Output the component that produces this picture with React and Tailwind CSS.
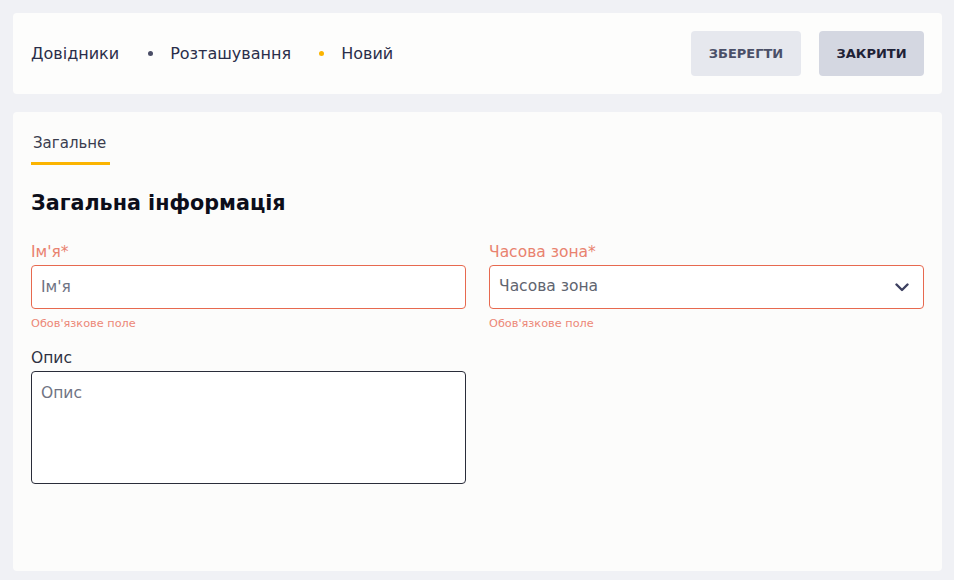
import React from 'react';

const FONT = { fontFamily: '"DejaVu Sans", "Noto Sans", sans-serif' };

function Field({ label, error, children, required }) {
  return (
    <div className="flex flex-col">
      <label className={`text-[15.5px] leading-[18px] mb-[4px] ${required ? 'text-[#e9826f]' : 'text-[#2e3142]'}`}>
        {label}
      </label>
      {children}
      {error && <span className="text-[11.3px] leading-[14px] mt-[8px] text-[#ec8777]">{error}</span>}
    </div>
  );
}

export default function App() {
  return (
    <div className="min-h-[580px] bg-[#f0f1f5] pl-[13px] pr-[12px] pt-[13px] pb-[9px] flex flex-col gap-[18px]" style={FONT}>
      {/* Header */}
      <div className="bg-[#fdfdfc] rounded-[4px] h-[81px] flex items-center justify-between pl-[18px] pr-[18px]">
        <div className="flex items-center text-[16px] text-[#2a2e4a]">
          <span>Довідники</span>
          <span className="w-[5px] h-[5px] rounded-full bg-[#4a4d66] ml-[29px] mr-[17px]" />
          <span>Розташування</span>
          <span className="w-[5px] h-[5px] rounded-full bg-[#fbb400] ml-[28px] mr-[17px]" />
          <span>Новий</span>
        </div>
        <div className="flex items-center gap-[18px]">
          <button className="h-[45px] w-[110px] rounded-[4px] bg-[#e6e8ee] text-[13px] font-bold text-[#4b5068]">
            ЗБЕРЕГТИ
          </button>
          <button className="h-[45px] w-[105px] rounded-[4px] bg-[#d4d7e1] text-[13px] font-bold text-[#1f2236]">
            ЗАКРИТИ
          </button>
        </div>
      </div>

      {/* Body */}
      <div className="flex-1 bg-[#fcfcfb] rounded-[4px] px-[18px] pt-[19px] pb-[18px] h-[459px]">
        <div className="inline-flex flex-col">
          <span className="text-[15px] leading-[18px] text-[#3a3d4e] px-[2px]">Загальне</span>
          <span className="h-[3px] w-[79px] bg-[#fbb400] mt-[10px]" />
        </div>

        <h2 className="text-[20.7px] leading-[26px] font-bold text-[#0c0e1a] mt-[25px]">Загальна інформація</h2>

        <div className="grid grid-cols-2 gap-x-[23px] mt-[27px]">
          <Field label="Ім'я*" required error="Обов'язкове поле">
            <input
              placeholder="Ім'я"
              className="h-[44px] w-full rounded-[4px] border border-[#e7694f] bg-white px-[9px] text-[15.5px] placeholder:text-[#6f7383] outline-none"
            />
          </Field>
          <Field label="Часова зона*" required error="Обов'язкове поле">
            <div className="h-[44px] w-full rounded-[4px] border border-[#e7694f] bg-white pl-[9px] pr-[14px] flex items-center justify-between">
              <span className="text-[15.5px] text-[#60646f]">Часова зона</span>
              <svg width="14" height="9" viewBox="0 0 14 9" fill="none">
                <path d="M1.5 1.5 L7 7 L12.5 1.5" stroke="#3d4060" strokeWidth="2.4" strokeLinecap="round" strokeLinejoin="round" />
              </svg>
            </div>
          </Field>
          <div className="mt-[18px]">
            <Field label="Опис">
              <textarea
                placeholder="Опис"
                className="h-[113px] w-full resize-none rounded-[4px] border border-[#2a2d3a] bg-white px-[9px] py-[12px] text-[15.5px] leading-[18px] placeholder:text-[#6f7383] outline-none"
              />
            </Field>
          </div>
        </div>
      </div>
    </div>
  );
}
